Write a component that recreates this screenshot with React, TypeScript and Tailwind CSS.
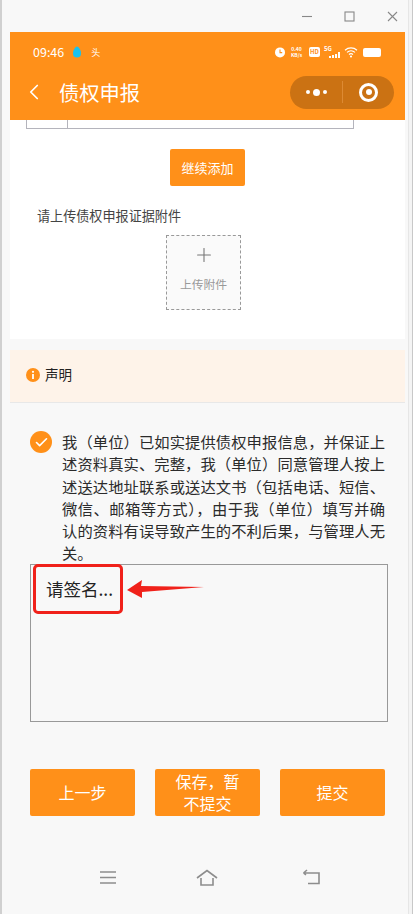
import { Check, ChevronLeft, Plus } from "lucide-react";
import type { ReactNode } from "react";

const ORANGE = "bg-[#ff9019]";

function StatusBar() {
  return (
    <div className="flex h-[36px] items-center justify-between pl-[23px] pr-[24px] pt-[4px] text-white">
      <div className="flex items-center">
        <span className="text-[12.5px] leading-none">09:46</span>
        <svg className="ml-[9px]" width="8" height="12" viewBox="0 0 8 12">
          <path d="M4 0.500C6 1 8 4 8 7.500A4 4 0 0 1 0 7.500C0 4 2 1 4 0.500Z" fill="#19c2ee" />
        </svg>
        <span className="ml-[10px] text-[9px] leading-none">头</span>
      </div>
      <div className="flex items-center">
        {/* alarm */}
        <svg width="12" height="12" viewBox="0 0 12 12">
          <circle cx="6" cy="6.400" r="5" fill="#fff" />
          <path d="M6 3.600v3h2.200" stroke="#ff9019" strokeWidth="1.100" fill="none" />
        </svg>
        <span className="ml-[4px] w-[13px] text-center text-[5px] font-bold leading-[6px]">
          0.40
          <br />
          KB/s
        </span>
        <span className="ml-[6px] flex h-[10px] w-[11px] items-center justify-center rounded-[2px] bg-white text-[6px] font-bold leading-none text-[#ff9019]">
          HD
        </span>
        <div className="relative ml-[4px] h-[12px] w-[16px]">
          <span className="absolute left-0 top-0 text-[6px] font-bold leading-none">5G</span>
          <span className="absolute bottom-0 right-0 flex items-end gap-[1px]">
            <i className="block h-[2px] w-[2px] bg-white" />
            <i className="block h-[3px] w-[2px] bg-white" />
            <i className="block h-[4px] w-[2px] bg-white" />
            <i className="block h-[6px] w-[2px] bg-white" />
          </span>
        </div>
        <svg className="ml-[4px]" width="14" height="12" viewBox="0 0 14 12" fill="none" stroke="#fff" strokeWidth="1.200">
          <path d="M1 4.200c3.400-3 8.600-3 12 0" />
          <path d="M3 6.400c2.300-2 5.700-2 8 0" />
          <path d="M5 8.500c1.200-1 2.800-1 4 0" />
          <circle cx="7" cy="10.500" r=".5" fill="#fff" />
        </svg>
        <span className="ml-[5px] h-[9px] w-[18px] rounded-[2px] bg-white" />
      </div>
    </div>
  );
}

function NavBar() {
  return (
    <div className="flex h-[52px] items-center pl-[11px] pr-[11px] pb-[4px] text-white">
      <ChevronLeft size={26} strokeWidth={1.600} />
      <span className="ml-[12px] text-[20.300px] leading-none">债权申报</span>
      <div className="ml-auto flex h-[33px] w-[104px] items-center rounded-full bg-[#cb7213]">
        <div className="flex flex-1 items-center justify-center gap-[3px] pl-[1px]">
          <i className="block h-[4px] w-[4px] rounded-full bg-white" />
          <i className="block h-[7px] w-[7px] rounded-full bg-white" />
          <i className="block h-[4px] w-[4px] rounded-full bg-white" />
        </div>
        <div className="h-[22px] w-px bg-[#dd8a33]" />
        <div className="flex flex-1 items-center justify-center">
          <div className="flex h-[19px] w-[19px] items-center justify-center rounded-full border-[3px] border-white">
            <i className="block h-[6px] w-[6px] rounded-full bg-white" />
          </div>
        </div>
      </div>
    </div>
  );
}

function WhiteCard() {
  return (
    <div className="h-[219px] bg-white">
      <div className="ml-[16px] flex h-[9px] w-[328px] border-x border-b border-[#b4b4bc]">
        <div className="w-[41px] border-r border-[#b4b4bc]" />
      </div>
      <div className="mt-[20px] flex justify-center">
        <div className={`flex h-[37px] w-[75px] items-center justify-center rounded-[2px] ${ORANGE} text-[13px] text-white`}>
          继续添加
        </div>
      </div>
      <div className="ml-[27px] mt-[18px] text-[13.100px] leading-[24px] text-[#444]">请上传债权申报证据附件</div>
      <div className="ml-[156px] mt-[7px] flex h-[75px] w-[75px] flex-col items-center border border-dashed border-[#999] bg-[#fafafa]">
        <Plus className="mt-[8px] text-[#777]" size={22} strokeWidth={1.200} />
        <span className="mt-[12px] text-[11.800px] leading-none text-[#999]">上传附件</span>
      </div>
    </div>
  );
}

function Declaration() {
  return (
    <div className="flex pl-[28px] pt-[27px]">
      <div className="mt-[1px] flex h-[22px] w-[22px] shrink-0 items-center justify-center rounded-full bg-[#ff9019]">
        <Check className="text-white" size={15} strokeWidth={2.600} />
      </div>
      <p className="ml-[10px] w-[323px] text-justify text-[15.300px] leading-[22.300px] text-[#2b2b2b]">
        我（单位）已如实提供债权申报信息，并保证上述资料真实、完整，我（单位）同意管理人按上述送达地址联系或送达文书（包括电话、短信、微信、邮箱等方式），由于我（单位）填写并确认的资料有误导致产生的不利后果，与管理人无关。
      </p>
    </div>
  );
}

function SignBox() {
  return (
    <div className="relative ml-[28px] h-[158px] w-[358px] border border-[#999]">
      <span className="absolute left-[15px] top-[13px] text-[17.500px] leading-[22px] text-[#222]">请签名...</span>
      {/* red annotation drawn over the box */}
      <div className="absolute left-[2px] top-[-1px] h-[50px] w-[90px] rounded-[5px] border-[3.500px] border-[#f0211a]" />
      <svg className="absolute left-[96px] top-[14px]" width="78" height="20" viewBox="0 0 78 20">
        <path d="M0 11 L15 1 L14 7 L77 8 L15 13 L15 19 Z" fill="#f0211a" />
      </svg>
    </div>
  );
}

function ActionButton({ children }: { children: ReactNode }) {
  return (
    <div className={`flex h-[47px] w-[105px] items-center justify-center rounded-[2px] px-[20px] ${ORANGE} text-center text-[16px] leading-[22px] text-white`}>
      {children}
    </div>
  );
}

function BottomNav() {
  return (
    <div className="ml-[10px] mt-[53px] flex justify-center text-[#8d8d8d]">
      <svg width="18" height="15" viewBox="0 0 18 15" fill="none" stroke="currentColor" strokeWidth="1.600" className="mr-[79px] mt-[1px]">
        <path d="M1 2h16M1 7.500h16M1 13h16" />
      </svg>
      <svg width="22" height="17" viewBox="0 0 22 17" fill="none" stroke="currentColor" strokeWidth="1.600" className="mr-[84px]">
        <path d="M1 9 L11 1.500 L21 9 M5 9v7h12V9" />
      </svg>
      <svg width="19" height="16" viewBox="0 0 19 16" fill="none" stroke="currentColor" strokeWidth="1.600">
        <path d="M1.500 4H17v10.500H6M1.500 4L5 1M1.500 4L4 6" />
      </svg>
    </div>
  );
}

export default function App() {
  return (
    <div className="flex h-[914px] w-[416px] overflow-hidden bg-white font-['Noto_Sans_CJK_SC','Noto_Sans',sans-serif]">
      <div className="h-[914px] w-[409px] shrink-0 border-l-2 border-r border-l-[#d0d0d0] border-r-[#e6e6e6] bg-[#f8f8f8]">
        {/* window title bar */}
        <div className="flex h-[32px] items-center justify-end pr-[10px] text-[#888]">
          <svg width="12" height="12" viewBox="0 0 12 12" fill="none" stroke="currentColor" strokeWidth="1.100">
            <path d="M1 6.500h10" />
          </svg>
          <svg className="ml-[31px]" width="11" height="11" viewBox="0 0 11 11" fill="none" stroke="currentColor" strokeWidth="1.100">
            <rect x="1" y="1" width="9" height="9" />
          </svg>
          <svg className="ml-[32px]" width="11" height="11" viewBox="0 0 11 11" fill="none" stroke="currentColor" strokeWidth="1.100">
            <path d="M1 1l9 9M10 1l-9 9" />
          </svg>
        </div>
        <div className="ml-[8px] w-[395px]">
          <div className={ORANGE}>
            <StatusBar />
            <NavBar />
          </div>
          <WhiteCard />
          <div className="mt-[11px] flex h-[53px] items-center border-b border-[#e8e8e8] bg-[#fef3e9] pl-[16px] pb-[2px]">
            <svg width="14" height="14" viewBox="0 0 14 14">
              <circle cx="7" cy="7" r="7" fill="#ff9019" />
              <path d="M7 6v5" stroke="#fff" strokeWidth="1.800" />
              <circle cx="7" cy="3.800" r="1.100" fill="#fff" />
            </svg>
            <span className="ml-[5px] text-[13.500px] leading-none text-[#222]">声明</span>
          </div>
        </div>
        <Declaration />
        <SignBox />
        <div className="ml-[28px] mt-[47px] flex w-[355px] justify-between">
          <ActionButton>上一步</ActionButton>
          <ActionButton>保存，暂不提交</ActionButton>
          <ActionButton>提交</ActionButton>
        </div>
        <BottomNav />
      </div>
      {/* sliver of the desktop behind the window */}
      <div className="h-[914px] w-[4px] shrink-0 border-r border-[#c8c8c8] bg-[#f4f4f4]" />
    </div>
  );
}
